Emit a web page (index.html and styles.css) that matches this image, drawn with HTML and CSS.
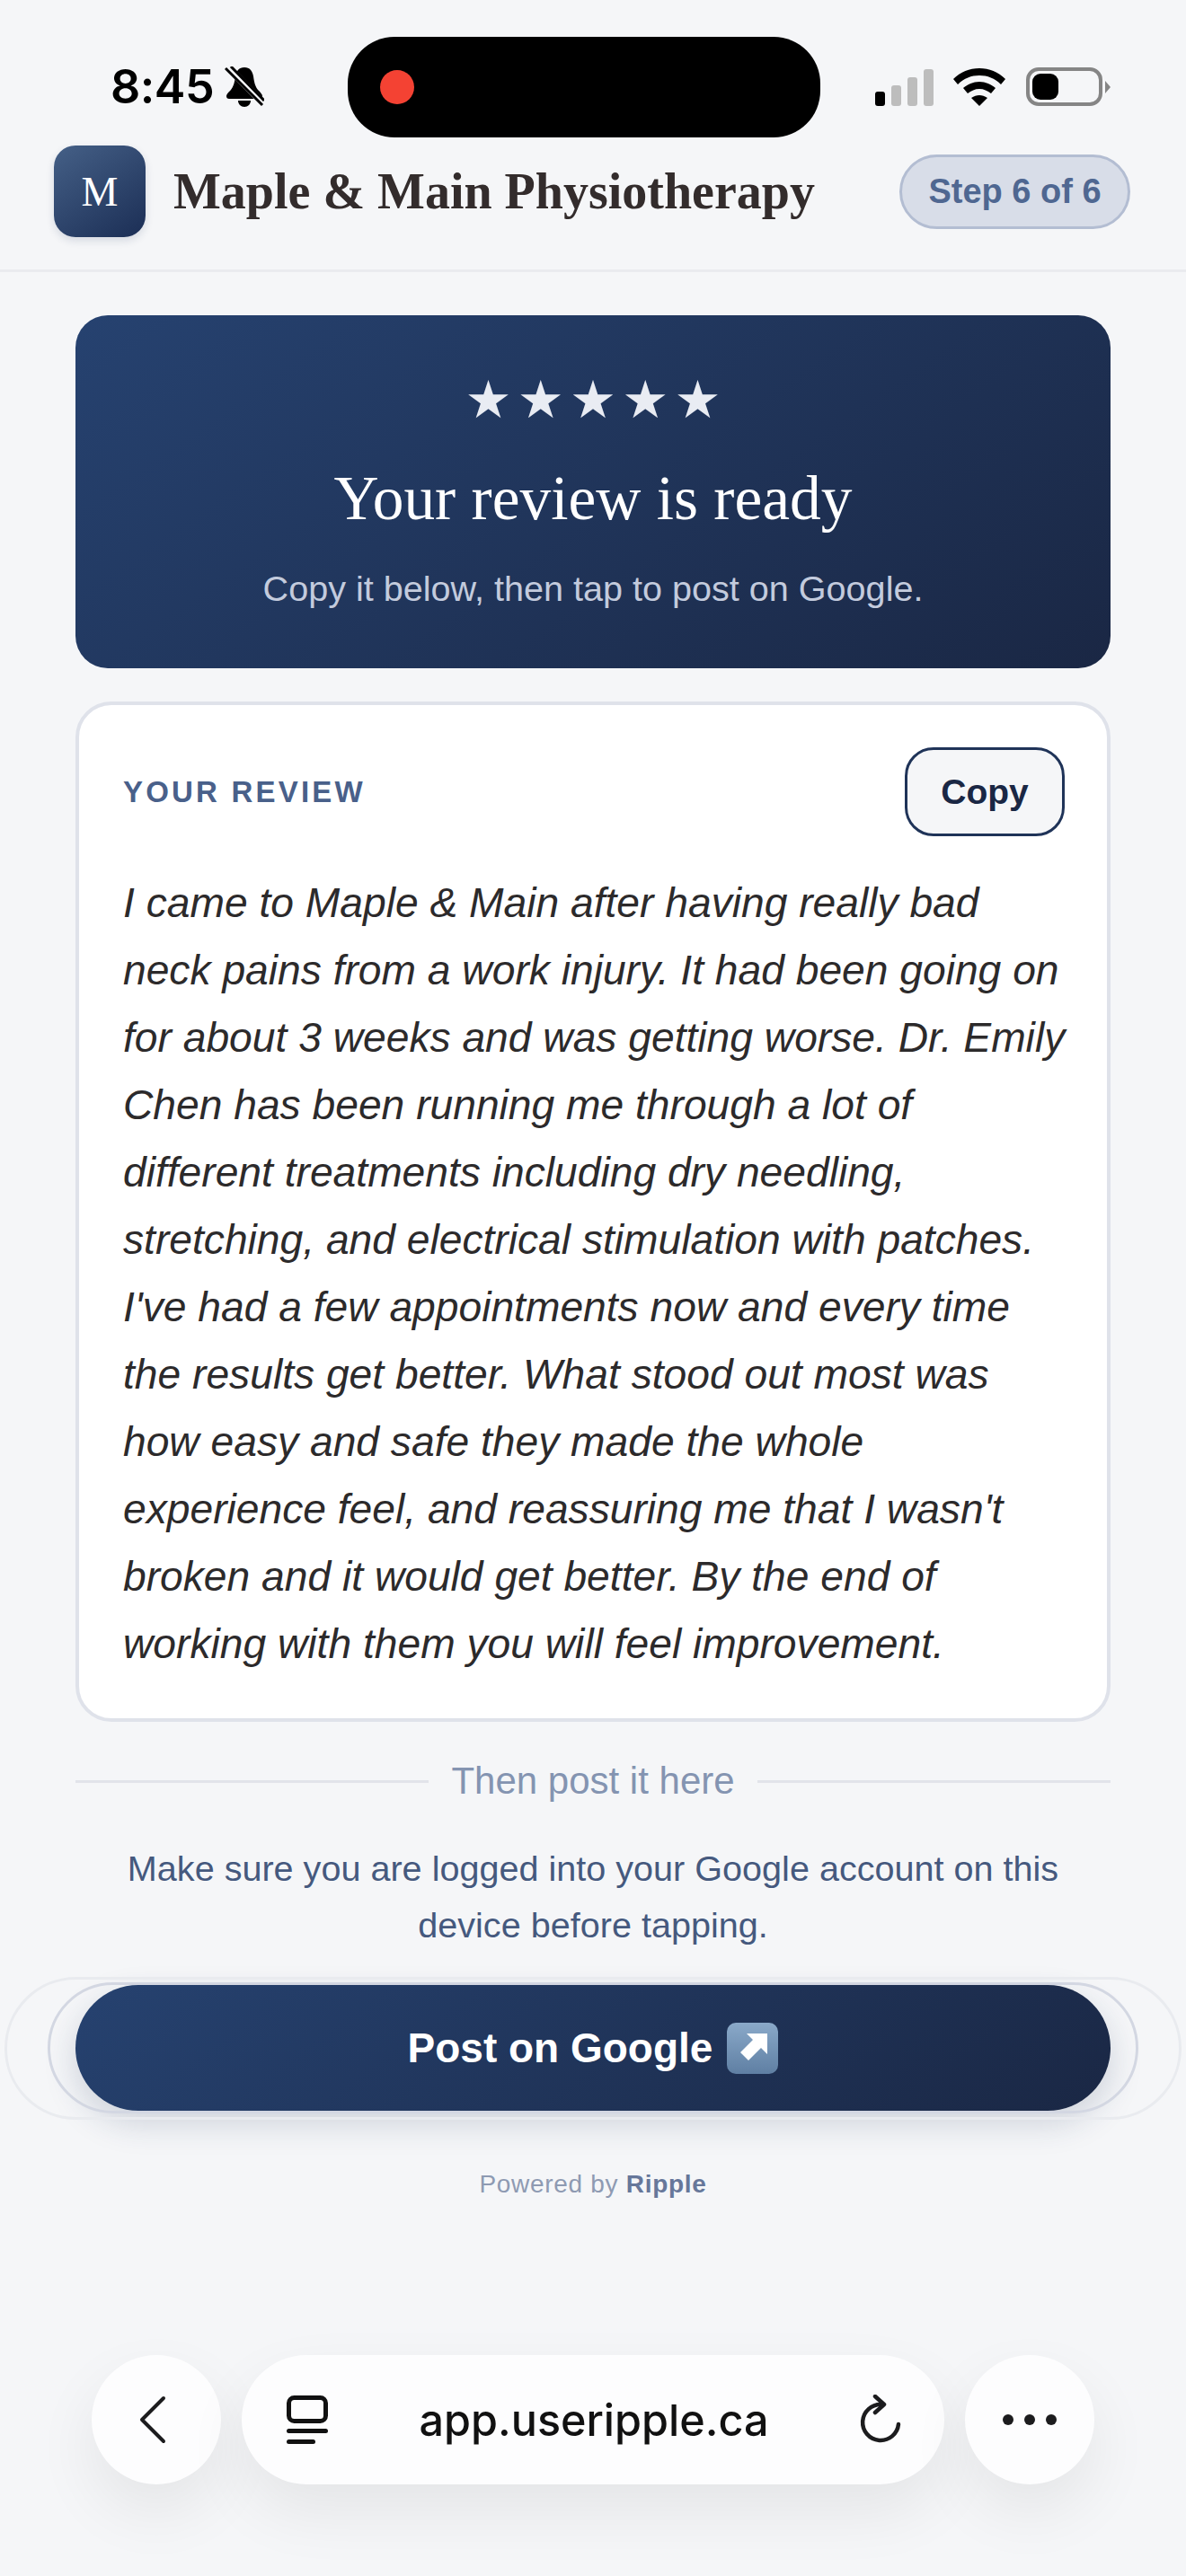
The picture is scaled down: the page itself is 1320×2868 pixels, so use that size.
FILE: index.html
```html
<!DOCTYPE html>
<html lang="en">
<head>
<meta charset="utf-8">
<title>Your review is ready</title>
<link rel="stylesheet" href="styles.css">
</head>
<body>
<div class="page">
  <div class="status">
    <div class="status-left">
      <span class="time">8:45</span>
      <svg class="bell" viewBox="0 0 44 46" width="44" height="46"><path d="M22 1c6 0 9 4 10 10 1 7 2 11 5 15 3 3 5 5 5 7 0 2-1 3-3 3H5c-2 0-3-1-3-3 0-2 2-4 5-7 3-4 4-8 5-15 1-6 4-10 10-10z" fill="#000"/><path d="M15 38h14c0 4-3 7-7 7s-7-3-7-7z" fill="#000"/><path d="M4 1l40 41" stroke="#f5f6f8" stroke-width="8" fill="none"/><path d="M1 2l41 41M7 0l37 38" stroke="#000" stroke-width="3" fill="none"/></svg>
    </div>
    <div class="island"><span class="rec"></span></div>
    <div class="status-right">
      <div class="signal"><i class="b1"></i><i class="b2"></i><i class="b3"></i><i class="b4"></i></div>
      <svg class="wifi" viewBox="0 0 58 42" width="58" height="42"><path d="M29 0c11 0 21 4 29 12l-5 6C46 11 38 8 29 8S12 11 5 18l-5-6C8 4 18 0 29 0z" fill="#000"/><path d="M29 15c7 0 13 3 18 7l-5 6c-4-3-8-5-13-5s-9 2-13 5l-5-6c5-4 11-7 18-7z" fill="#000"/><path d="M29 30c3 0 6 1 9 3l-9 9-9-9c3-2 6-3 9-3z" fill="#000"/></svg>
      <div class="battery"><div class="cell"><span class="charge"></span></div><span class="nub"></span></div>
    </div>
  </div>

  <header class="topbar">
    <div class="brand">
      <div class="logo">M</div>
      <div class="clinic">Maple &amp; Main Physiotherapy</div>
    </div>
    <div class="step">Step 6 of 6</div>
  </header>

  <main class="content">
    <section class="hero">
      <div class="stars">★★★★★</div>
      <h1 class="hero-title">Your review is ready</h1>
      <p class="hero-sub">Copy it below, then tap to post on Google.</p>
    </section>

    <section class="card">
      <div class="card-head">
        <span class="label">YOUR REVIEW</span>
        <span class="copy">Copy</span>
      </div>
      <p class="review">I came to Maple &amp; Main after having really bad<br>neck pains from a work injury. It had been going on<br>for about 3 weeks and was getting worse. Dr. Emily<br>Chen has been running me through a lot of<br>different treatments including dry needling,<br>stretching, and electrical stimulation with patches.<br>I've had a few appointments now and every time<br>the results get better. What stood out most was<br>how easy and safe they made the whole<br>experience feel, and reassuring me that I wasn't<br>broken and it would get better. By the end of<br>working with them you will feel improvement.</p>
    </section>

    <div class="divider"><span class="rule"></span><span class="divider-text">Then post it here</span><span class="rule"></span></div>
    <p class="note">Make sure you are logged into your Google account on this<br>device before tapping.</p>

    <div class="post">
      <span class="ring ring-outer"></span>
      <span class="ring ring-inner"></span>
      <span class="post-text">Post on Google</span>
      <svg class="emoji" viewBox="0 0 57 57" width="57" height="57"><defs><linearGradient id="eg" x1="0" y1="0" x2="0" y2="1"><stop offset="0" stop-color="#8aa9c9"/><stop offset="1" stop-color="#5f7fa3"/></linearGradient></defs><rect width="57" height="57" rx="10" fill="url(#eg)"/><path d="M45 12v23l-7-7-14 14-9-9 14-14-7-7z" fill="#fff"/></svg>
    </div>

    <p class="powered">Powered by <b>Ripple</b></p>
  </main>

  <nav class="browser">
    <div class="round">
      <svg viewBox="0 0 31 54" width="31" height="54"><path d="M28 3L4 27l24 24" fill="none" stroke="#1c1c1e" stroke-width="4" stroke-linecap="round" stroke-linejoin="round"/></svg>
    </div>
    <div class="url">
      <svg class="tabs" viewBox="0 0 46 54" width="46" height="54"><rect x="2.5" y="2.5" width="41" height="26" rx="6" fill="none" stroke="#111" stroke-width="5"/><rect x="0" y="37" width="46" height="5" rx="2.5" fill="#111"/><rect x="0" y="49" width="32" height="5" rx="2.5" fill="#111"/></svg>
      <span class="url-text">app.useripple.ca</span>
      <svg class="reload" viewBox="0 0 46 56" width="46" height="56"><path d="M24 11A20 20 0 1 0 43 33" fill="none" stroke="#1c1c1e" stroke-width="4.5" stroke-linecap="round"/><path d="M17 2l10 9-10 9" fill="none" stroke="#1c1c1e" stroke-width="4.5" stroke-linecap="round" stroke-linejoin="round"/></svg>
    </div>
    <div class="round dots"><i></i><i></i><i></i></div>
  </nav>
</div>
</body>
</html>
```
FILE: styles.css
```css
* { box-sizing: border-box; }
html, body { margin: 0; padding: 0; background: #f5f6f8; }
.page { width: 1320px; height: 2868px; overflow: hidden; display: flex; flex-direction: column; font-family: "Liberation Sans", Arial, sans-serif; }

.status { display: flex; align-items: center; height: 153px; padding-top: 41px; }
.status-left { width: 387px; padding-left: 123px; display: flex; align-items: center; gap: 12px; }
.time { font-family: Inter, "Liberation Sans", sans-serif; font-weight: 600; font-size: 52px; letter-spacing: -0.5px; color: #000; line-height: 1; }
.bell { display: block; }
.island { width: 526px; height: 112px; border-radius: 52px; background: #000; display: flex; align-items: center; padding-left: 36px; }
.rec { width: 38px; height: 38px; border-radius: 50%; background: #f44233; }
.status-right { flex: 1; display: flex; align-items: flex-end; padding-left: 61px; height: 42px; }
.signal { display: flex; align-items: flex-end; gap: 7px; height: 41px; }
.signal i { display: block; width: 11px; border-radius: 3px; background: #bdbdbd; }
.signal .b1 { height: 16px; background: #000; }
.signal .b2 { height: 23px; }
.signal .b3 { height: 32px; }
.signal .b4 { height: 41px; }
.wifi { margin-left: 22px; display: block; }
.battery { display: flex; align-items: center; margin-left: 23px; gap: 3px; }
.cell { width: 85px; height: 43px; border: 4px solid #858585; border-radius: 14px; padding: 3px; }
.charge { display: block; width: 29px; height: 29px; border-radius: 9px; background: #000; }
.nub { width: 0; height: 0; border-top: 7px solid transparent; border-bottom: 7px solid transparent; border-left: 6px solid #858585; }

.topbar { height: 150px; flex: none; padding: 9px 62px 36px 60px; display: flex; align-items: center; justify-content: space-between; border-bottom: 3px solid #eaebef; }
.brand { display: flex; align-items: center; gap: 31px; }
.logo { width: 102px; height: 102px; border-radius: 24px; background: linear-gradient(145deg, #456087, #1b2e55); color: #fff; display: flex; align-items: center; justify-content: center; font-family: "Liberation Serif", serif; font-size: 46px; box-shadow: 0 4px 10px rgba(30,50,90,.14); }
.clinic { font-family: "Liberation Serif", serif; font-weight: 700; font-size: 56px; color: #332c2c; white-space: nowrap; }
.step { width: 257px; height: 83px; border-radius: 42px; background: #d8dde8; border: 3px solid #b3bdd2; color: #4f6791; font-weight: 700; font-size: 38px; display: flex; align-items: center; justify-content: center; }

.content { padding: 48px 84px 0; display: flex; flex-direction: column; flex: none; }
.hero { height: 393px; border-radius: 36px; background: linear-gradient(145deg, #264270, #1a2744); text-align: center; color: #fff; padding-top: 60px; }
.stars { font-family: "DejaVu Sans", sans-serif; font-size: 58px; line-height: 68px; letter-spacing: 6.2px; text-indent: 6.2px; color: #e9ecf3; }
.hero-title { margin: 36px 0 0; font-family: "Liberation Serif", serif; font-weight: 400; font-size: 69.4px; line-height: 80px; }
.hero-sub { margin: 35px 0 0; font-size: 39.6px; line-height: 50px; color: #c3cbdd; }

.card { margin-top: 37px; height: 1136px; background: #fff; border: 4px solid #dfe2ea; border-radius: 40px; padding: 47px 47px 0 49px; }
.card-head { display: flex; align-items: center; justify-content: space-between; }
.label { font-weight: 700; font-size: 33px; letter-spacing: 3.2px; color: #49608a; }
.copy { width: 178px; height: 99px; border: 3px solid #1f3358; border-radius: 32px; background: #f5f6f8; color: #1a2744; font-weight: 700; font-size: 39px; display: flex; align-items: center; justify-content: center; }
.review { margin: 37px 0 0; font-style: italic; font-size: 46.2px; line-height: 75px; color: #2c2a2b; white-space: nowrap; }

.divider { margin-top: 42px; height: 48px; display: flex; align-items: center; gap: 25px; }
.rule { flex: 1; height: 3px; background: #e2e4ea; }
.divider-text { font-size: 42px; color: #8494b1; white-space: nowrap; }
.note { margin: 42px 0 0; text-align: center; font-size: 39.6px; line-height: 63px; color: #45597e; }

.post { position: relative; margin-top: 35px; height: 140px; border-radius: 70px; background: linear-gradient(145deg, #264270, #1a2744); display: flex; align-items: center; justify-content: center; gap: 16px; box-shadow: 0 14px 36px rgba(30,50,90,.18); }
.ring { position: absolute; border-radius: 90px; pointer-events: none; }
.ring-inner { left: -31px; right: -31px; top: -3px; bottom: -3px; border: 3px solid #d3d7e2; }
.ring-outer { left: -79px; right: -79px; top: -9px; bottom: -10px; border: 3px solid #e9ebef; }
.post-text { color: #fff; font-weight: 700; font-size: 46px; }
.emoji { display: block; }

.powered { margin: 64px 0 0; text-align: center; font-size: 28px; line-height: 36px; letter-spacing: 0.7px; color: #8e9ab2; }
.powered b { color: #66779a; }

.browser { margin-top: 172px; padding: 0 102px; display: flex; gap: 23px; justify-content: space-between; }
.round { width: 144px; height: 144px; border-radius: 50%; background: #fdfdfe; display: flex; align-items: center; justify-content: center; flex: none; box-shadow: 0 30px 70px rgba(0,0,0,.07); }
.round svg { margin-right: 9px; }
.url { flex: 1; height: 144px; border-radius: 72px; background: #fdfdfe; display: flex; align-items: center; justify-content: space-between; padding: 0 48px 0 50px; box-shadow: 0 30px 70px rgba(0,0,0,.07); }
.url-text { font-family: Inter, "Liberation Sans", sans-serif; font-weight: 500; font-size: 48.5px; color: #111; }
.dots { gap: 12px; }
.dots i { display: block; width: 12px; height: 12px; border-radius: 50%; background: #1c1c1e; }
```
